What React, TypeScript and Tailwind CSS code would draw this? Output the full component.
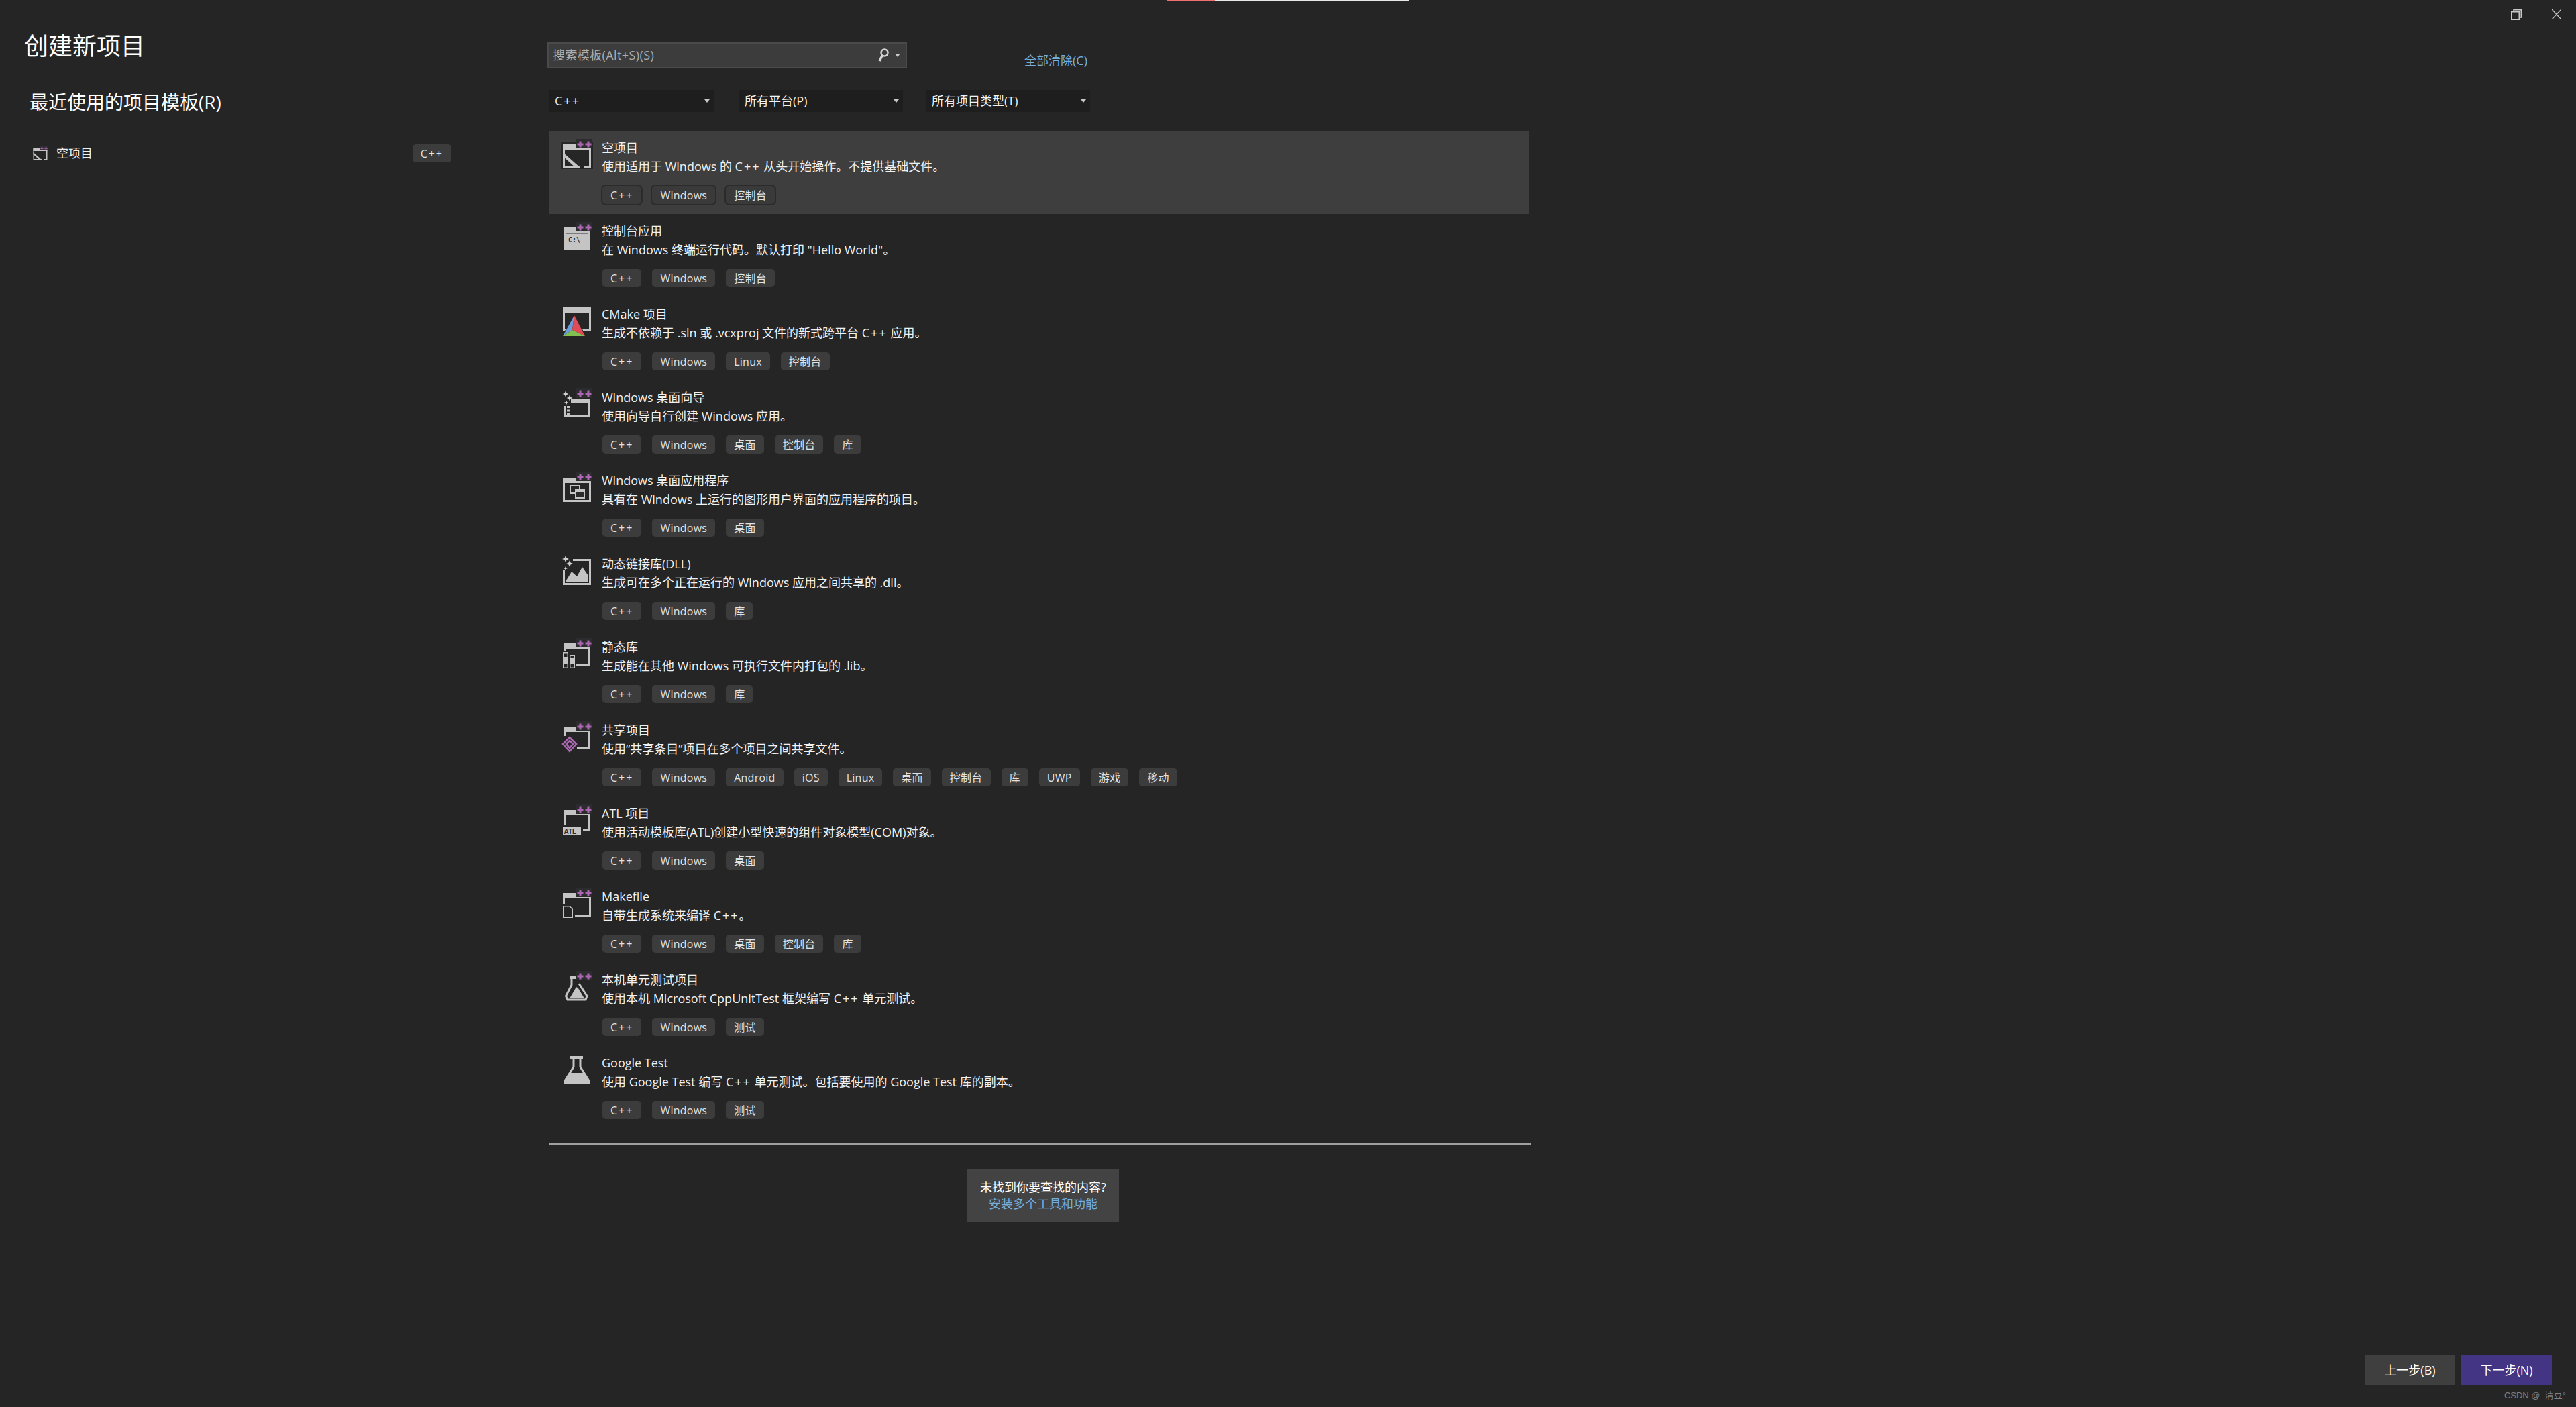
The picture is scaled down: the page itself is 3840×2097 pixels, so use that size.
import { ReactNode } from 'react';

const G = '#c4c4c4';
const D = '#252526';

// the two purple plus signs on the VC++ template icons
function Plus({ dx = 0 }: { dx?: number }) {
    return (
        <g transform={`translate(${dx} 0)`}>
            <rect x="22" y="0" width="25" height="14" fill="#2c2c2e" />
            <path d="M29 3.500V12.500M24.500 8H33.500M41 3.500V12.500M36.500 8H45.500" stroke="#ad68b3" strokeWidth="3" fill="none" />
        </g>
    );
}

function Frame({ x, y, w, h, head = 8 }: { x: number; y: number; w: number; h: number; head?: number }) {
    return (
        <>
            <rect x={x + 1.5} y={y + 1.5} width={w - 3} height={h - 3} fill="none" stroke={G} strokeWidth="3" />
            <rect x={x} y={y} width={w} height={head} fill={G} />
        </>
    );
}

const Sparkle = ({ x, y, r }: { x: number; y: number; r: number }) => (
    <path d={`M${x} ${y - r}L${x + r * 0.3} ${y - r * 0.3}L${x + r} ${y}L${x + r * 0.3} ${y + r * 0.3}L${x} ${y + r}L${x - r * 0.3} ${y + r * 0.3}L${x - r} ${y}L${x - r * 0.3} ${y - r * 0.3}Z`} fill="#d0d0d0" />
);

const icons: Record<string, ReactNode> = {
    empty: (
        <>
            <rect x="0" y="5" width="48" height="40" fill="#262626" />
            <Frame x={3} y={8} w={42} h={35} />
            <path d="M3 20L29 43H22L3 26Z" fill={G} />
            <rect x="29" y="39" width="5" height="4" fill="#262626" />
            <Plus />
        </>
    ),
    console: (
        <>
            <rect x="4" y="8" width="39" height="33" fill={G} />
            <rect x="7" y="16" width="33" height="1.500" fill="#333" />
            <text x="11" y="30" fontSize="10" fontWeight="700" fill="#2a2a2a" fontFamily="'DejaVu Sans Mono', monospace">C:\</text>
            <Plus dx={0} />
        </>
    ),
    cmake: (
        <>
            <Frame x={3} y={3} w={42} h={35} head={9} />
            <path d="M20 13L0 49H39Z" fill="#252526" />
            <path d="M20 15L3 46L17 37Z" fill="#6b9bd8" />
            <path d="M20 15L17 37L36 46Z" fill="#e14b57" />
            <path d="M3 46L17 37L36 46Z" fill="#80bf50" />
        </>
    ),
    wizard: (
        <>
            <Frame x={5} y={16} w={39} h={26} head={5} />
            <rect x="3" y="4" width="12" height="22" fill={D} />
            <Sparkle x={7} y={8} r={4.500} />
            <Sparkle x={13} y={14} r={4.500} />
            <Sparkle x={8} y={21} r={3.500} />
            <path d="M11 26V41" stroke={G} strokeWidth="4" strokeDasharray="3 2.500" />
            <Plus />
        </>
    ),
    desktop: (
        <>
            <Frame x={3} y={9} w={42} h={36} />
            <rect x="14" y="21" width="14" height="11" fill="none" stroke={G} strokeWidth="2" />
            <rect x="22" y="27" width="13" height="12" fill="#2a2a2a" stroke={G} strokeWidth="2" />
            <rect x="22" y="27" width="13" height="4" fill={G} />
            <Plus />
        </>
    ),
    dll: (
        <>
            <rect x="4.500" y="7.500" width="39" height="36" fill="none" stroke={G} strokeWidth="3" />
            <path d="M8 38L16 25L24 32L32 18L41 31V40H8Z" fill={G} />
            <rect x="2" y="0" width="16" height="22" fill={D} />
            <Sparkle x={7} y={6} r={5} />
            <Sparkle x={13} y={13} r={5} />
            <Sparkle x={7} y={20} r={3} />
        </>
    ),
    lib: (
        <>
            <Frame x={4} y={7} w={39} h={34} head={10} />
            <rect x="0" y="19" width="23" height="29" fill={D} />
            <rect x="3.750" y="21.750" width="6.500" height="22.500" fill="none" stroke={G} strokeWidth="1.500" />
            <rect x="3" y="28" width="8" height="10" fill={G} />
            <rect x="13.750" y="25.750" width="6.500" height="18.500" fill="none" stroke={G} strokeWidth="1.500" />
            <rect x="13" y="30" width="8" height="8" fill={G} />
            <Plus />
        </>
    ),
    shared: (
        <>
            <Frame x={4} y={8} w={39} h={33} />
            <rect x="0" y="22" width="24" height="26" fill={D} />
            <path d="M13 24L23 34L13 45L3 34Z" fill="none" stroke="#ad68b3" strokeWidth="2.500" />
            <path d="M13 29L18 34L13 40L8 34Z" fill="none" stroke="#ad68b3" strokeWidth="2.500" />
            <Plus />
        </>
    ),
    atl: (
        <>
            <Frame x={5} y={8} w={39} h={31} />
            <rect x="0" y="31" width="33" height="16" fill={D} />
            <rect x="3" y="34" width="27" height="11" fill={G} />
            <text x="4.500" y="43.500" fontSize="10" fontWeight="700" fill="#2a2a2a" fontFamily="'Liberation Sans', sans-serif">ATL</text>
            <Plus />
        </>
    ),
    makefile: (
        <>
            <Frame x={3} y={8} w={42} h={35} />
            <rect x="0" y="24" width="21" height="24" fill={D} />
            <path d="M3.750 27.750H13L17.250 32V44.250H3.750Z" fill="none" stroke={G} strokeWidth="1.500" />
            <Plus />
        </>
    ),
    unit: (
        <>
            <rect x="13" y="8" width="9" height="4" fill={G} />
            <path d="M16 12V21L7.500 37.500L10 43H37L39 37.500L27 19" fill="none" stroke={G} strokeWidth="3" />
            <path d="M16 36L23 24L26 26L35 41H13Z" fill={G} />
            <Plus />
        </>
    ),
    gtest: (
        <>
            <rect x="14" y="3" width="19" height="4" fill={G} />
            <path d="M19 7V19L6 40Q6 43.500 9 43.500H39Q42 43.500 42 40L29 19V7" fill="none" stroke={G} strokeWidth="3" />
            <path d="M12 28H36L44 41Q44 45 40 45H8Q4 45 4 41Z" fill={G} />
        </>
    ),
};

const templates = [
    { icon: 'empty', name: '空项目', desc: '使用适用于 Windows 的 C++ 从头开始操作。不提供基础文件。', tags: ['C++', 'Windows', '控制台'] },
    { icon: 'console', name: '控制台应用', desc: '在 Windows 终端运行代码。默认打印 "Hello World"。', tags: ['C++', 'Windows', '控制台'] },
    { icon: 'cmake', name: 'CMake 项目', desc: '生成不依赖于 .sln 或 .vcxproj 文件的新式跨平台 C++ 应用。', tags: ['C++', 'Windows', 'Linux', '控制台'] },
    { icon: 'wizard', name: 'Windows 桌面向导', desc: '使用向导自行创建 Windows 应用。', tags: ['C++', 'Windows', '桌面', '控制台', '库'] },
    { icon: 'desktop', name: 'Windows 桌面应用程序', desc: '具有在 Windows 上运行的图形用户界面的应用程序的项目。', tags: ['C++', 'Windows', '桌面'] },
    { icon: 'dll', name: '动态链接库(DLL)', desc: '生成可在多个正在运行的 Windows 应用之间共享的 .dll。', tags: ['C++', 'Windows', '库'] },
    { icon: 'lib', name: '静态库', desc: '生成能在其他 Windows 可执行文件内打包的 .lib。', tags: ['C++', 'Windows', '库'] },
    { icon: 'shared', name: '共享项目', desc: '使用“共享条目”项目在多个项目之间共享文件。', tags: ['C++', 'Windows', 'Android', 'iOS', 'Linux', '桌面', '控制台', '库', 'UWP', '游戏', '移动'] },
    { icon: 'atl', name: 'ATL 项目', desc: '使用活动模板库(ATL)创建小型快速的组件对象模型(COM)对象。', tags: ['C++', 'Windows', '桌面'] },
    { icon: 'makefile', name: 'Makefile', desc: '自带生成系统来编译 C++。', tags: ['C++', 'Windows', '桌面', '控制台', '库'] },
    { icon: 'unit', name: '本机单元测试项目', desc: '使用本机 Microsoft CppUnitTest 框架编写 C++ 单元测试。', tags: ['C++', 'Windows', '测试'] },
    { icon: 'gtest', name: 'Google Test', desc: '使用 Google Test 编写 C++ 单元测试。包括要使用的 Google Test 库的副本。', tags: ['C++', 'Windows', '测试'] },
];

function Caret({ className }: { className: string }) {
    return (
        <svg width="8" height="5" viewBox="0 0 8 5" className={className}>
            <path d="M0 0H8L4 5Z" fill="#c8c8c8" />
        </svg>
    );
}

// C++ sets wide in the original font, so space it out wherever it appears
function Spaced({ text }: { text: string }) {
    const parts = text.split('C++');
    return (
        <>
            {parts.map((p, i) => (
                <span key={i}>
                    {p}
                    {i < parts.length - 1 && <span className="tracking-[2px]">C++</span>}
                </span>
            ))}
        </>
    );
}

function Dropdown({ label, width }: { label: string; width: string }) {
    return (
        <div className={`flex h-[33px] items-center justify-between bg-[#1e1e1e] pl-[9px] pr-[6px] text-[18px] text-[#f1f1f1] ${width}`}>
            <span><Spaced text={label} /></span>
            <Caret className="" />
        </div>
    );
}

function Tag({ label, selected }: { label: string; selected: boolean }) {
    return (
        <span className={`flex h-[27px] items-center rounded-[5px] px-3 text-[16px] tracking-[0.25px] text-[#e2e2e2] ${selected ? 'bg-[#3a3a3a] ring-2 ring-[#2b2b2b]' : 'bg-[#3c3c3c]'}`}>
            <Spaced text={label} />
        </span>
    );
}

export default function App() {
    return (
        <div className="relative flex h-[2097px] w-[3840px] flex-col overflow-hidden bg-[#252526] font-['Open_Sans','Noto_Sans_CJK_SC',sans-serif] text-[#f1f1f1]">
            {/* top progress strip */}
            <div className="absolute left-[1739px] top-0 flex h-[2px] w-[362px]">
                <div className="w-[72px] bg-[#f06f6f]" />
                <div className="flex-1 bg-[#e8e8e8]" />
            </div>

            {/* window buttons */}
            <div className="absolute right-[22px] top-[14px] flex items-start gap-[45px]">
                <svg width="16" height="16" viewBox="0 0 16 16" fill="none" stroke="#c8c8c8" strokeWidth="1.500">
                    <rect x="0.750" y="3.750" width="11.500" height="11.500" />
                    <path d="M4 3.500V0.750H15.250V12H12.500" />
                </svg>
                <svg width="14" height="15" viewBox="0 0 14 15" fill="none" stroke="#c8c8c8" strokeWidth="1.300">
                    <path d="M0 0L14 15M14 0L0 15" />
                </svg>
            </div>

            <div className="flex flex-1">
                {/* left column */}
                <div className="w-[818px] pl-[36px] pt-[49px]">
                    <h1 className="text-[36px] font-normal leading-[40px] text-white">创建新项目</h1>
                    <h2 className="ml-2 mt-[45px] text-[28px] leading-[36px] text-white">最近使用的项目模板(R)</h2>
                    <div className="ml-3 mt-[45px] flex h-[27px] w-[625px] items-center justify-between">
                        <div className="flex items-center gap-3">
                            <svg width="24" height="24" viewBox="0 0 48 48">{icons.empty}</svg>
                            <span className="text-[18px]">空项目</span>
                        </div>
                        <Tag label="C++" selected={false} />
                    </div>
                </div>

                {/* template list */}
                <div className="w-[1464px] pt-[63px]">
                    <div className="flex items-start">
                        <div className="-ml-[2px] flex h-[39px] w-[536px] items-center justify-between border-2 border-[#4a4a4a] bg-[#3c3c3c] pl-[6px] pr-2">
                            <span className="text-[18px] tracking-[0.4px] text-[#adadad]">搜索模板(Alt+S)(S)</span>
                            <div className="flex items-center gap-[9px]">
                                <svg width="16" height="21" viewBox="0 0 16 21" fill="none" stroke="#d4d4d4">
                                    <circle cx="9.500" cy="6.500" r="5" strokeWidth="2.500" />
                                    <path d="M6 11L2 19" strokeWidth="3.500" />
                                </svg>
                                <Caret className="" />
                            </div>
                        </div>
                        <span className="ml-[175px] mt-[16px] text-[18px] leading-[22px] text-[#75aedc]">全部清除(C)</span>
                    </div>

                    <div className="mt-[32px] flex gap-[37px]">
                        <Dropdown label="C++" width="w-[246px]" />
                        <div className="flex gap-[34px]">
                            <Dropdown label="所有平台(P)" width="w-[245px]" />
                            <Dropdown label="所有项目类型(T)" width="w-[245px]" />
                        </div>
                    </div>

                    <div className="mt-[28px] w-[1462px]">
                        {templates.map((t, i) => (
                            <div key={t.name} className={`flex h-[124px] pl-[18px] pt-3 ${i === 0 ? 'bg-[#3e3e3e]' : ''}`}>
                                <svg width="48" height="48" viewBox="0 0 48 48" className="shrink-0">{icons[t.icon]}</svg>
                                <div className="ml-[13px]">
                                    <div className="text-[18px] leading-[26px]">{t.name}</div>
                                    <div className="text-[18px] leading-[30px]"><Spaced text={t.desc} /></div>
                                    <div className="ml-px mt-[14px] flex gap-4">
                                        {t.tags.map((tag) => <Tag key={tag} label={tag} selected={i === 0} />)}
                                    </div>
                                </div>
                            </div>
                        ))}
                    </div>

                    <div className="mt-[21px] h-[2px] bg-[#a0a0a0]" />

                    <div className="ml-[624px] mt-[36px] flex h-[79px] w-[226px] flex-col items-center justify-center bg-[#434343] text-[18px] leading-[25px]">
                        <span className="text-white">未找到你要查找的内容?</span>
                        <span className="text-[#75aedc]">安装多个工具和功能</span>
                    </div>
                </div>
            </div>

            {/* footer buttons */}
            <div className="flex justify-end gap-[9px] pb-[33px] pr-9">
                <button className="h-[44px] w-[135px] bg-[#3f3f3f] text-[18px] text-white">上一步(B)</button>
                <button className="h-[44px] w-[135px] bg-[#433583] text-[18px] text-white">下一步(N)</button>
            </div>

            <span className="absolute bottom-[8px] right-[15px] font-['Liberation_Sans','Noto_Sans_CJK_SC',sans-serif] text-[13px] leading-[18px] text-[#808080]">CSDN @_清豆°</span>
        </div>
    );
}
